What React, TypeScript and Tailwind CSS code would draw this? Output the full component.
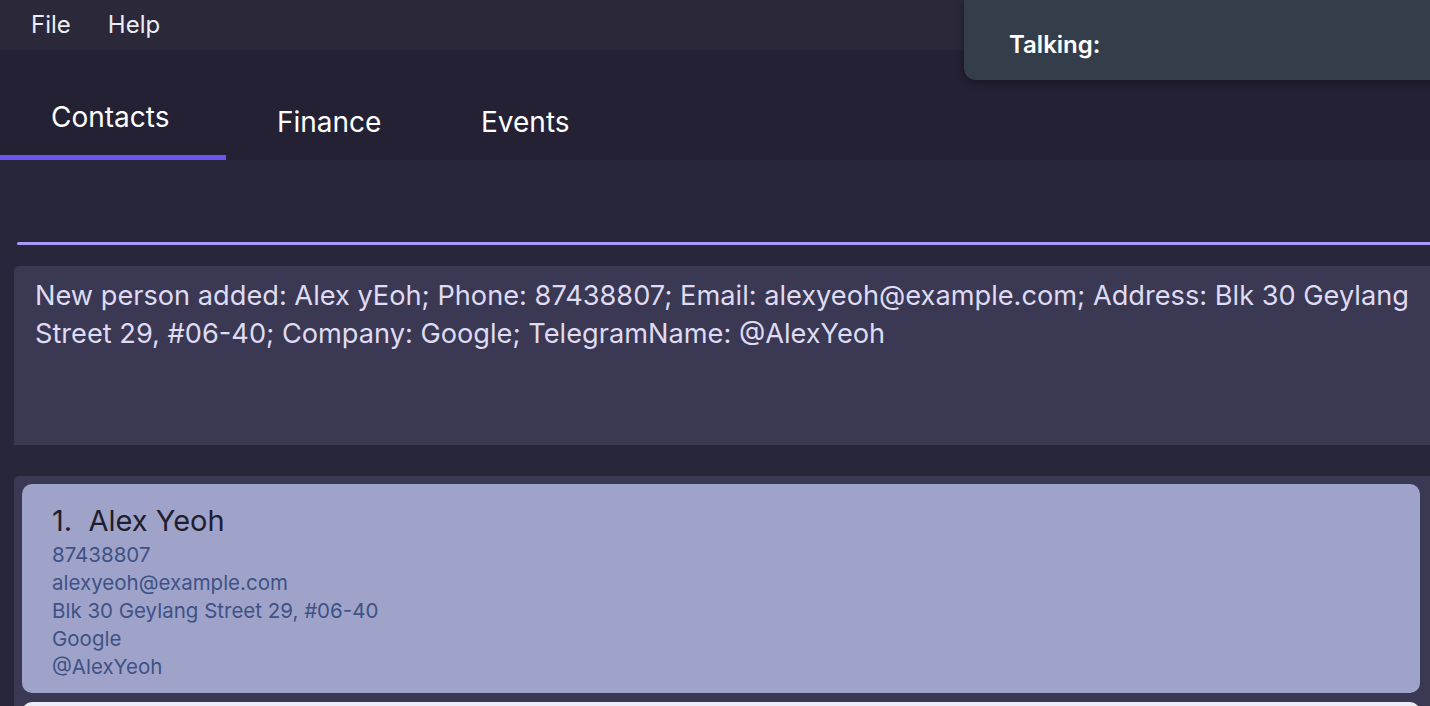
import React from 'react';

const font = { fontFamily: 'Inter, "Noto Sans", sans-serif' };

const details = ['87438807', 'alexyeoh@example.com', 'Blk 30 Geylang Street 29, #06-40', 'Google', '@AlexYeoh'];

export default function App() {
  return (
    <div className="relative w-[1430px] h-[706px] overflow-hidden flex flex-col bg-[#28263a] text-white" style={font}>
      <div className="h-[50px] flex items-center gap-[37px] pl-[31px] bg-[#2a2839] text-[24px] text-[#ececf2] shrink-0">
        <span>File</span>
        <span>Help</span>
      </div>

      <div className="absolute top-0 left-[964px] w-[520px] h-[80px] rounded-bl-[12px] bg-[#343d4a] shadow-[0_2px_8px_rgba(0,0,0,0.35)] flex items-center pl-[45px] pt-[10px]">
        <span className="text-[24px] font-semibold text-white">Talking:</span>
      </div>

      <div className="h-[110px] flex bg-[#232133] text-[28px] leading-[34px] shrink-0">
        <div className="w-[226px] h-full pl-[51px] pt-[50px] border-b-[5px] border-[#6b55f2]">
          Contacts
        </div>
        <div className="w-[204px] h-full pl-[51px] pt-[55px]">
          Finance
        </div>
        <div className="w-[190px] h-full pl-[51px] pt-[55px]">
          Events
        </div>
      </div>

      <div className="pl-[17px] pt-[82px] shrink-0">
        <div className="h-[3px] rounded-l-full bg-[#a99af7]" />
      </div>

      <div className="ml-[14px] mt-[21px] h-[179px] rounded-tl-[5px] bg-[#3b3853] pl-[21px] pt-[11px] shrink-0">
        <p className="text-[27.2px] leading-[38px] text-[#dedbf2] whitespace-nowrap">
          New person added: Alex yEoh; Phone: 87438807; Email: alexyeoh@example.com; Address: Blk 30 Geylang
          <br />
          Street 29, #06-40; Company: Google; TelegramName: @AlexYeoh
        </p>
      </div>

      <div className="ml-[14px] mt-[31px] flex-1 rounded-tl-[5px] bg-[#3b3853] pl-[8px] pr-[10px] pt-[8px] flex flex-col gap-[9px]">
        <div className="h-[209px] shrink-0 rounded-[10px] bg-[#a0a3c9] pl-[30px] pt-[20px]">
          <div className="text-[29px] leading-[34px] text-[#1f1e30]">1.&nbsp; Alex Yeoh</div>
          <div className="mt-[3px] flex flex-col text-[20.5px] leading-[28px] text-[#3e5286]">
            {details.map((d) => (
              <span key={d}>{d}</span>
            ))}
          </div>
        </div>
        <div className="h-[209px] shrink-0 rounded-[10px] bg-[#ececf6]" />
      </div>
    </div>
  );
}
